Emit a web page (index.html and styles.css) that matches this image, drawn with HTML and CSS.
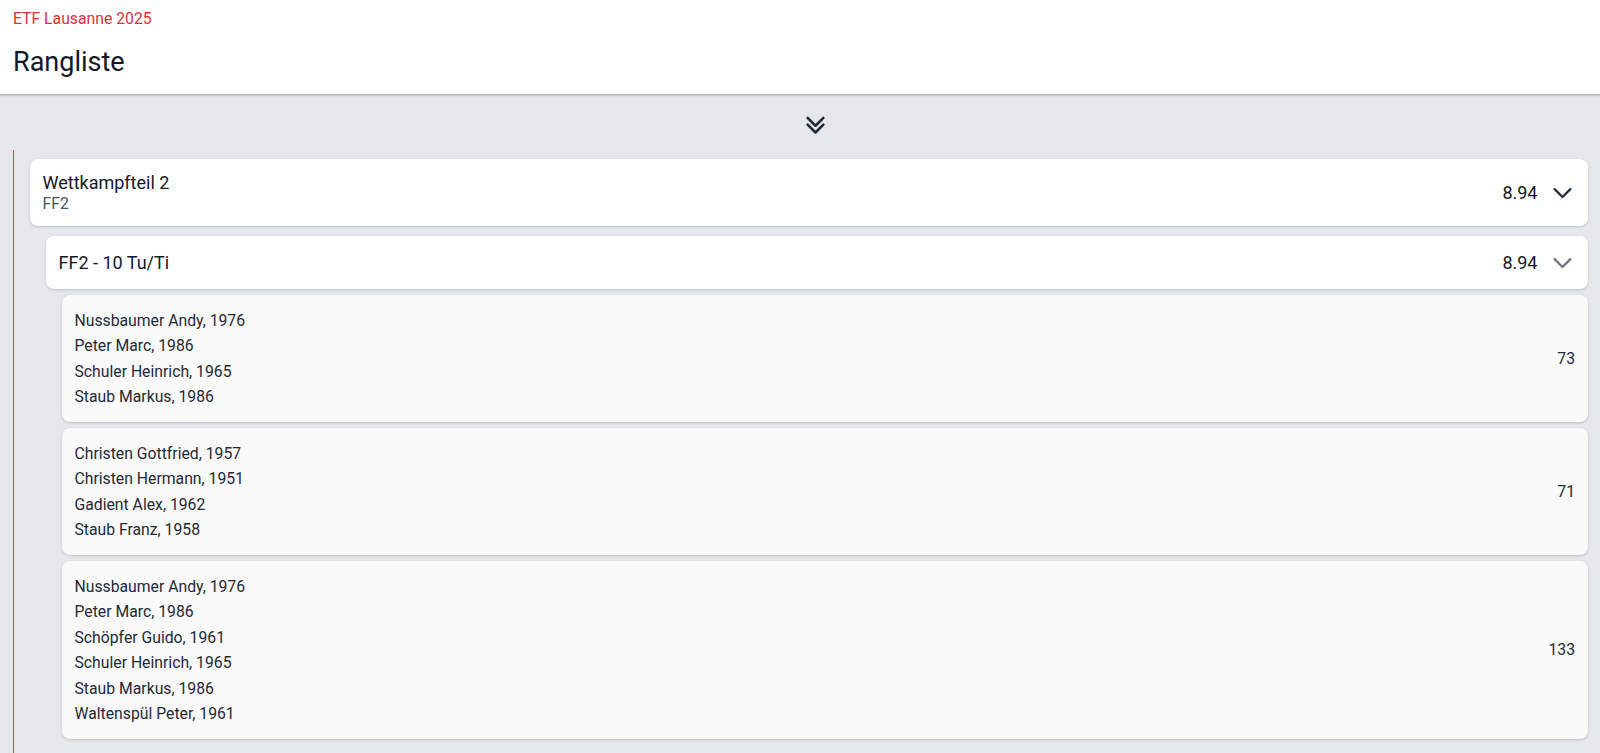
FILE: index.html
```html
<!DOCTYPE html>
<html lang="de">
<head>
<meta charset="utf-8">
<title>Rangliste</title>
<link rel="stylesheet" href="styles.css">
</head>
<body>
<header class="page-header">
  <div class="event">ETF Lausanne 2025</div>
  <h1 class="title">Rangliste</h1>
</header>
<main class="content">
  <div class="expand-row">
    <svg class="icon-double" viewBox="0 0 24 24" fill="none" stroke="currentColor" stroke-width="2.3" stroke-linecap="round" stroke-linejoin="round"><path d="M19 13l-7 7-7-7m14-6l-7 7-7-7"/></svg>
  </div>
  <div class="tree">
    <div class="card card-part">
      <div class="card-text">
        <div class="card-title">Wettkampfteil 2</div>
        <div class="card-sub">FF2</div>
      </div>
      <div class="card-score">8.94</div>
      <svg class="icon-chev" viewBox="0 0 24 24" fill="none" stroke="currentColor" stroke-width="2" stroke-linecap="round" stroke-linejoin="round"><path d="M19 9l-7 7-7-7"/></svg>
    </div>
    <div class="card card-cat">
      <div class="card-text">
        <div class="card-title single">FF2 - 10 Tu/Ti</div>
      </div>
      <div class="card-score">8.94</div>
      <svg class="icon-chev light" viewBox="0 0 24 24" fill="none" stroke="currentColor" stroke-width="2" stroke-linecap="round" stroke-linejoin="round"><path d="M19 9l-7 7-7-7"/></svg>
    </div>
    <div class="entries">
      <div class="entry">
        <div class="names">
          <div>Nussbaumer Andy, 1976</div>
          <div>Peter Marc, 1986</div>
          <div>Schuler Heinrich, 1965</div>
          <div>Staub Markus, 1986</div>
        </div>
        <div class="entry-score">73</div>
      </div>
      <div class="entry">
        <div class="names">
          <div>Christen Gottfried, 1957</div>
          <div>Christen Hermann, 1951</div>
          <div>Gadient Alex, 1962</div>
          <div>Staub Franz, 1958</div>
        </div>
        <div class="entry-score">71</div>
      </div>
      <div class="entry">
        <div class="names">
          <div>Nussbaumer Andy, 1976</div>
          <div>Peter Marc, 1986</div>
          <div>Schöpfer Guido, 1961</div>
          <div>Schuler Heinrich, 1965</div>
          <div>Staub Markus, 1986</div>
          <div>Waltenspül Peter, 1961</div>
        </div>
        <div class="entry-score">133</div>
      </div>
    </div>
  </div>
</main>
</body>
</html>
```
FILE: styles.css
```css
html, body {
  margin: 0;
  padding: 0;
}
body {
  font-family: Roboto, "Liberation Sans", sans-serif;
  color: #111827;
  background: #e5e7eb;
  min-height: 100vh;
  display: flex;
  flex-direction: column;
  overflow: hidden;
}
.page-header {
  background: #ffffff;
  padding: 10px 13px 14.5px;
  border-bottom: 1px solid #b4b4b4;
  box-shadow: 0 1px 1px rgba(0, 0, 0, 0.12);
  position: relative;
  z-index: 1;
}
.event {
  font-size: 15.75px;
  line-height: 18px;
  color: #dc3139;
}
.title {
  margin: 15.5px 0 0;
  font-size: 27px;
  font-weight: 400;
  line-height: 36px;
  color: #111827;
}
.content {
  flex: 1;
  display: flex;
  flex-direction: column;
  background: #e5e7eb;
}
.expand-row {
  display: flex;
  justify-content: center;
  align-items: flex-start;
  padding: 14.5px 0 0 30px;
  height: 55px;
  box-sizing: border-box;
}
.icon-double {
  width: 27px;
  height: 27px;
  color: #1f2937;
  display: block;
}
.tree {
  flex: 1;
  margin-left: 13px;
  border-left: 1.5px solid #d0464b;
  padding: 9px 12px 6px 15.5px;
}
.card {
  background: #ffffff;
  border-radius: 8px;
  box-shadow: 0 1px 3px rgba(0, 0, 0, 0.14), 0 1px 2px -1px rgba(0, 0, 0, 0.1);
  display: flex;
  align-items: center;
  padding: 12px 12.5px 12px 13px;
}
.card-cat {
  margin: 10px 0 0 16px;
  padding-top: 13px;
  padding-bottom: 13px;
}
.card-text {
  flex: 1;
}
.card-title {
  font-size: 18px;
  line-height: 23px;
  color: #111827;
}
.card-title.single {
  line-height: 27px;
}
.card-sub {
  font-size: 15.75px;
  line-height: 20px;
  color: #4b5563;
}
.card-score {
  font-size: 18px;
  line-height: 27px;
  color: #111827;
}
.icon-chev {
  width: 27px;
  height: 27px;
  margin-left: 11px;
  color: #1f2937;
  display: block;
  flex: none;
}
.icon-chev.light {
  color: #6b7280;
}
.entries {
  margin: 6px 0 0 32px;
  display: flex;
  flex-direction: column;
  gap: 6px;
}
.entry {
  background: #fafafa;
  border-radius: 8px;
  box-shadow: 0 1px 3px rgba(0, 0, 0, 0.14), 0 1px 2px -1px rgba(0, 0, 0, 0.1);
  display: flex;
  align-items: center;
  padding: 12.5px 13px 12.5px 13px;
}
.names {
  flex: 1;
  font-size: 15.75px;
  line-height: 25.5px;
  color: #1f2937;
}
.entry-score {
  font-size: 15.75px;
  line-height: 20px;
  color: #1f2937;
}
```
